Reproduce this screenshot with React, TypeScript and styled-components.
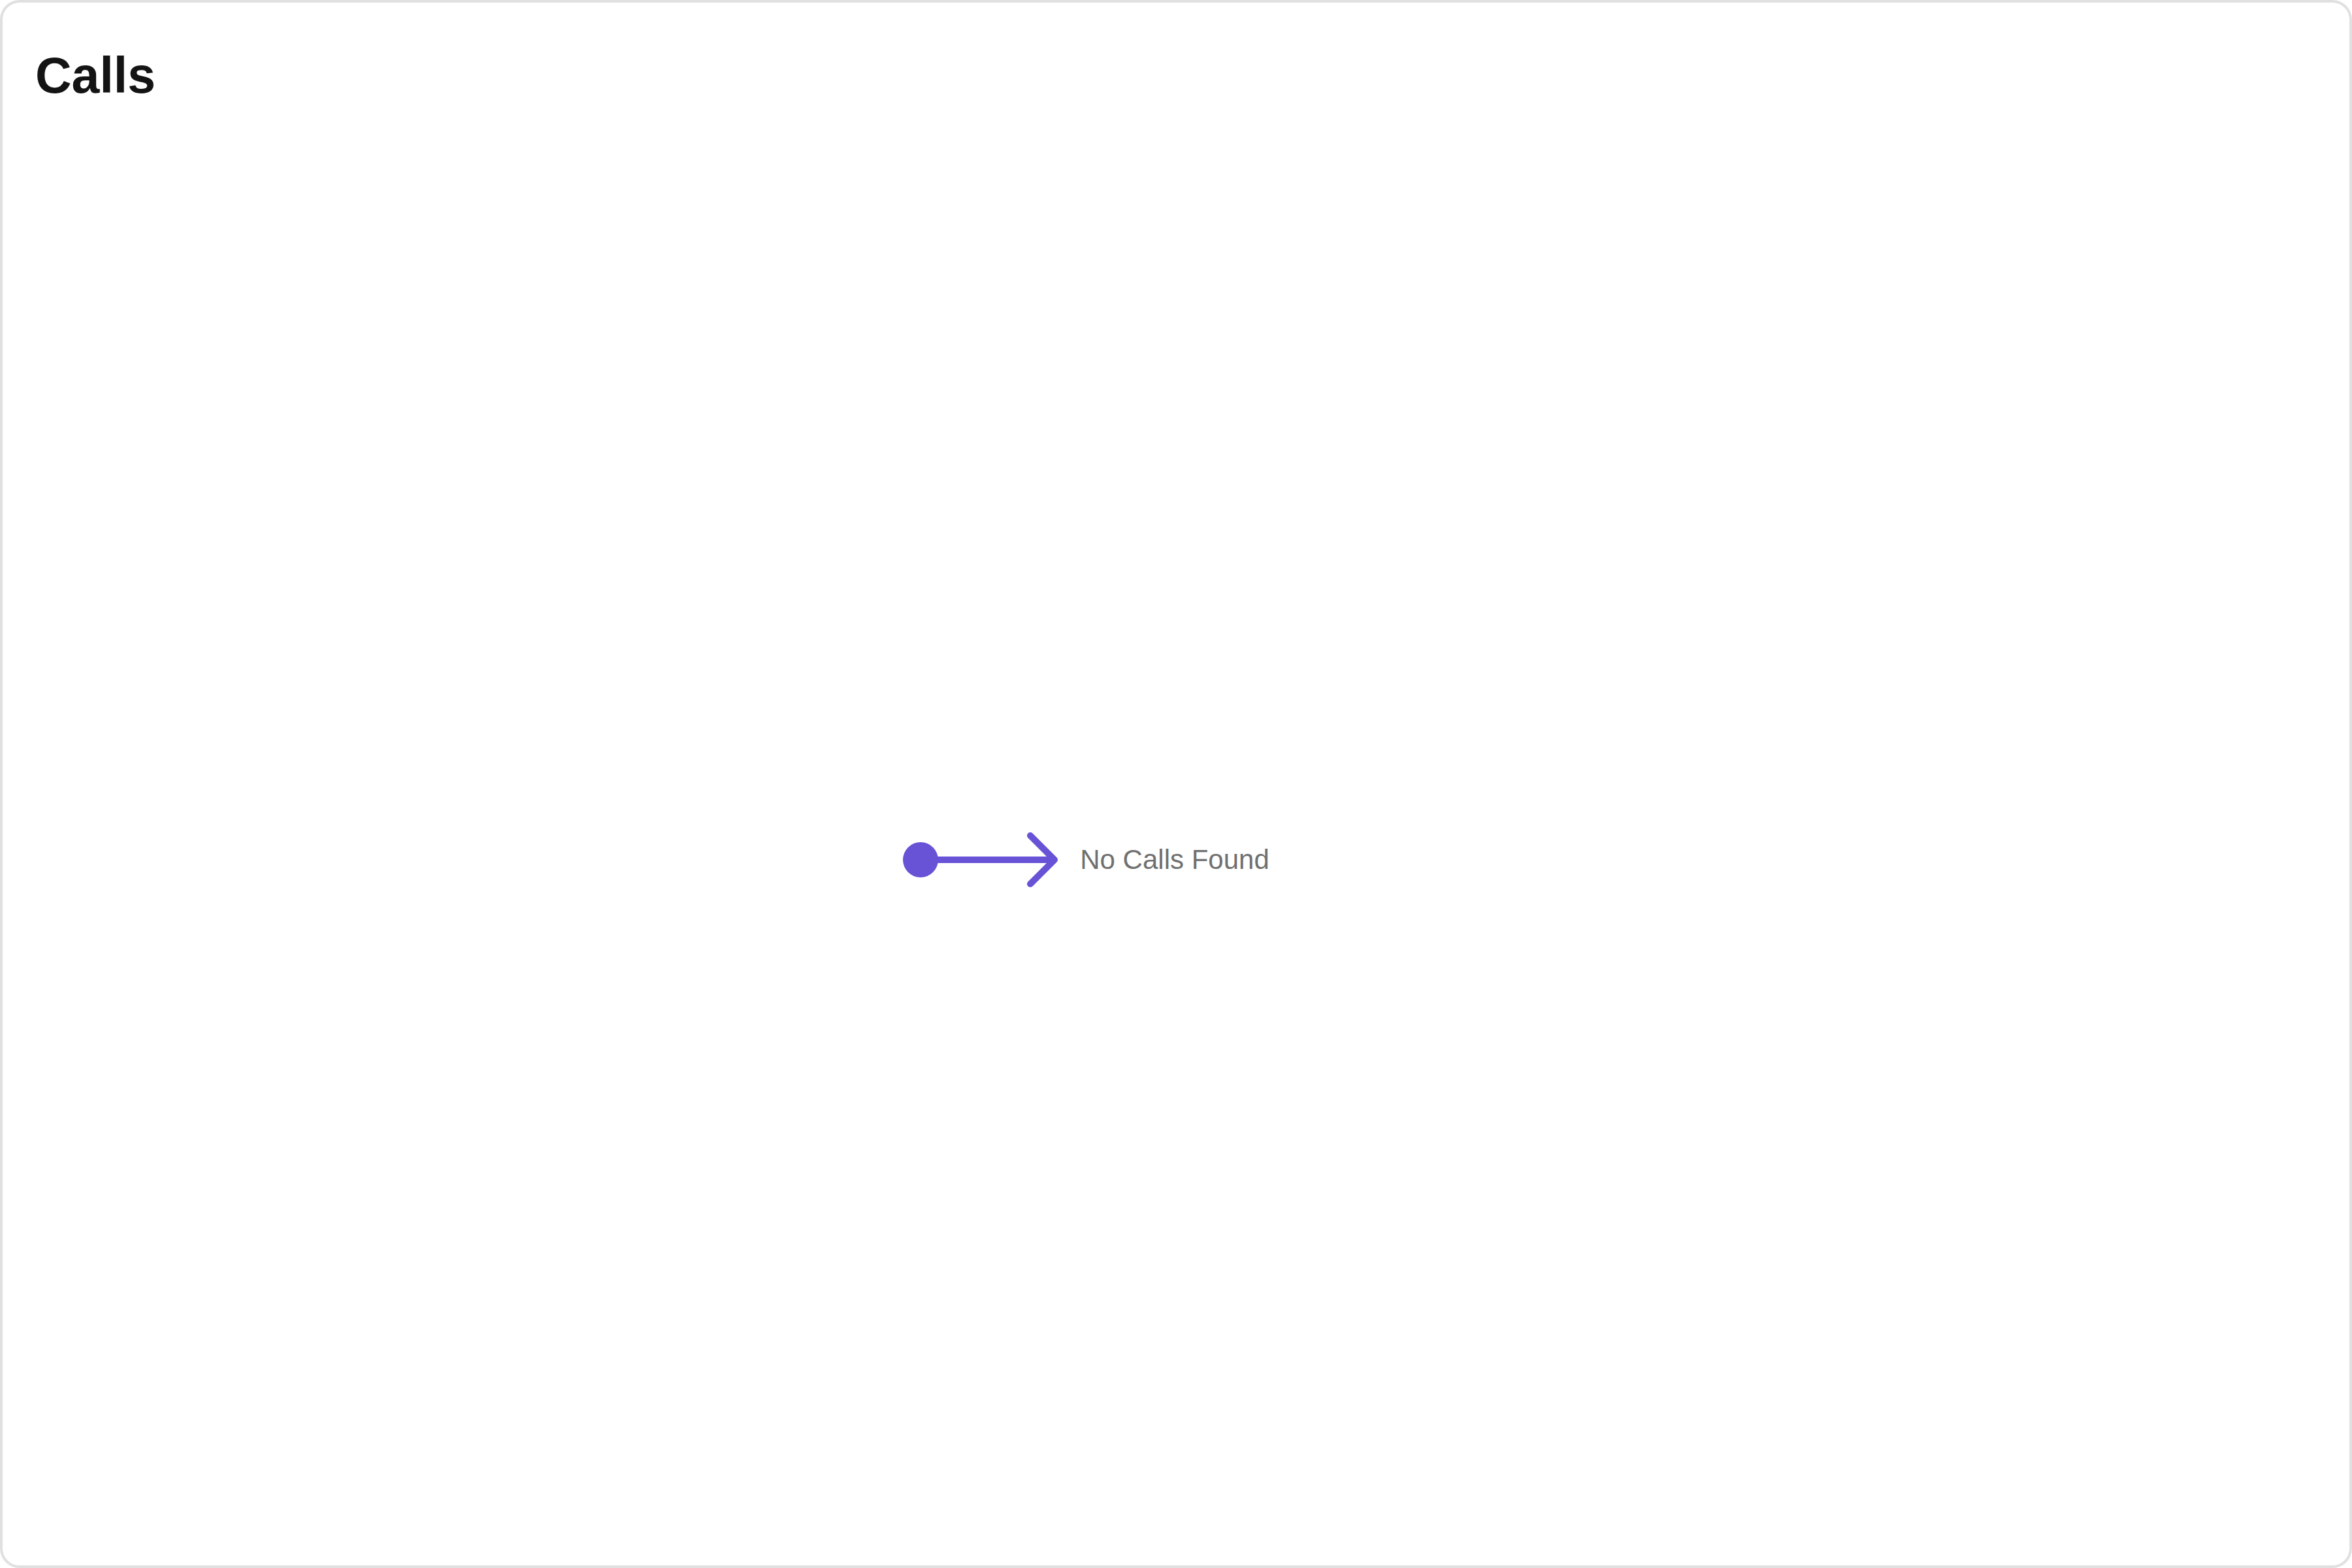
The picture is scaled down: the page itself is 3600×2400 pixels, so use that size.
import React from 'react';
import styled, { createGlobalStyle } from 'styled-components';

const GlobalStyle = createGlobalStyle`
  html, body {
    margin: 0;
    padding: 0;
    background: #ffffff;
  }
  body {
    font-family: "Liberation Sans", Arial, sans-serif;
  }
`;

const Card = styled.div`
  box-sizing: border-box;
  width: 3600px;
  height: 2400px;
  border: 4px solid #e0e0e0;
  border-radius: 30px;
  background: #ffffff;
  display: flex;
  flex-direction: column;
`;

const Header = styled.div`
  padding: 73px 50px 0;
`;

const Title = styled.h1`
  margin: 0;
  font-size: 77px;
  line-height: 77px;
  font-weight: 700;
  color: #141414;
`;

const Body = styled.div`
  flex: 1;
  display: flex;
  align-items: center;
  justify-content: center;
  padding: 82px 276px 0 0;
`;

const EmptyState = styled.div`
  display: flex;
  align-items: center;
  gap: 32px;
`;

const EmptyText = styled.span`
  font-size: 42px;
  color: #707070;
`;

const PURPLE = '#6852D6';

const PointerIcon = () => (
  <svg width="240" height="84" viewBox="0 0 240 84">
    <circle cx="28" cy="42" r="27" fill={PURPLE} />
    <line x1="28" y1="42" x2="231" y2="42" stroke={PURPLE} strokeWidth="10" />
    <polyline
      points="196,5 233,42 196,79"
      fill="none"
      stroke={PURPLE}
      strokeWidth="10"
      strokeLinecap="round"
      strokeLinejoin="round"
    />
  </svg>
);

function App() {
  return (
    <>
      <GlobalStyle />
      <Card>
        <Header>
          <Title>Calls</Title>
        </Header>
        <Body>
          <EmptyState>
            <PointerIcon />
            <EmptyText>No Calls Found</EmptyText>
          </EmptyState>
        </Body>
      </Card>
    </>
  );
}

export default App;
